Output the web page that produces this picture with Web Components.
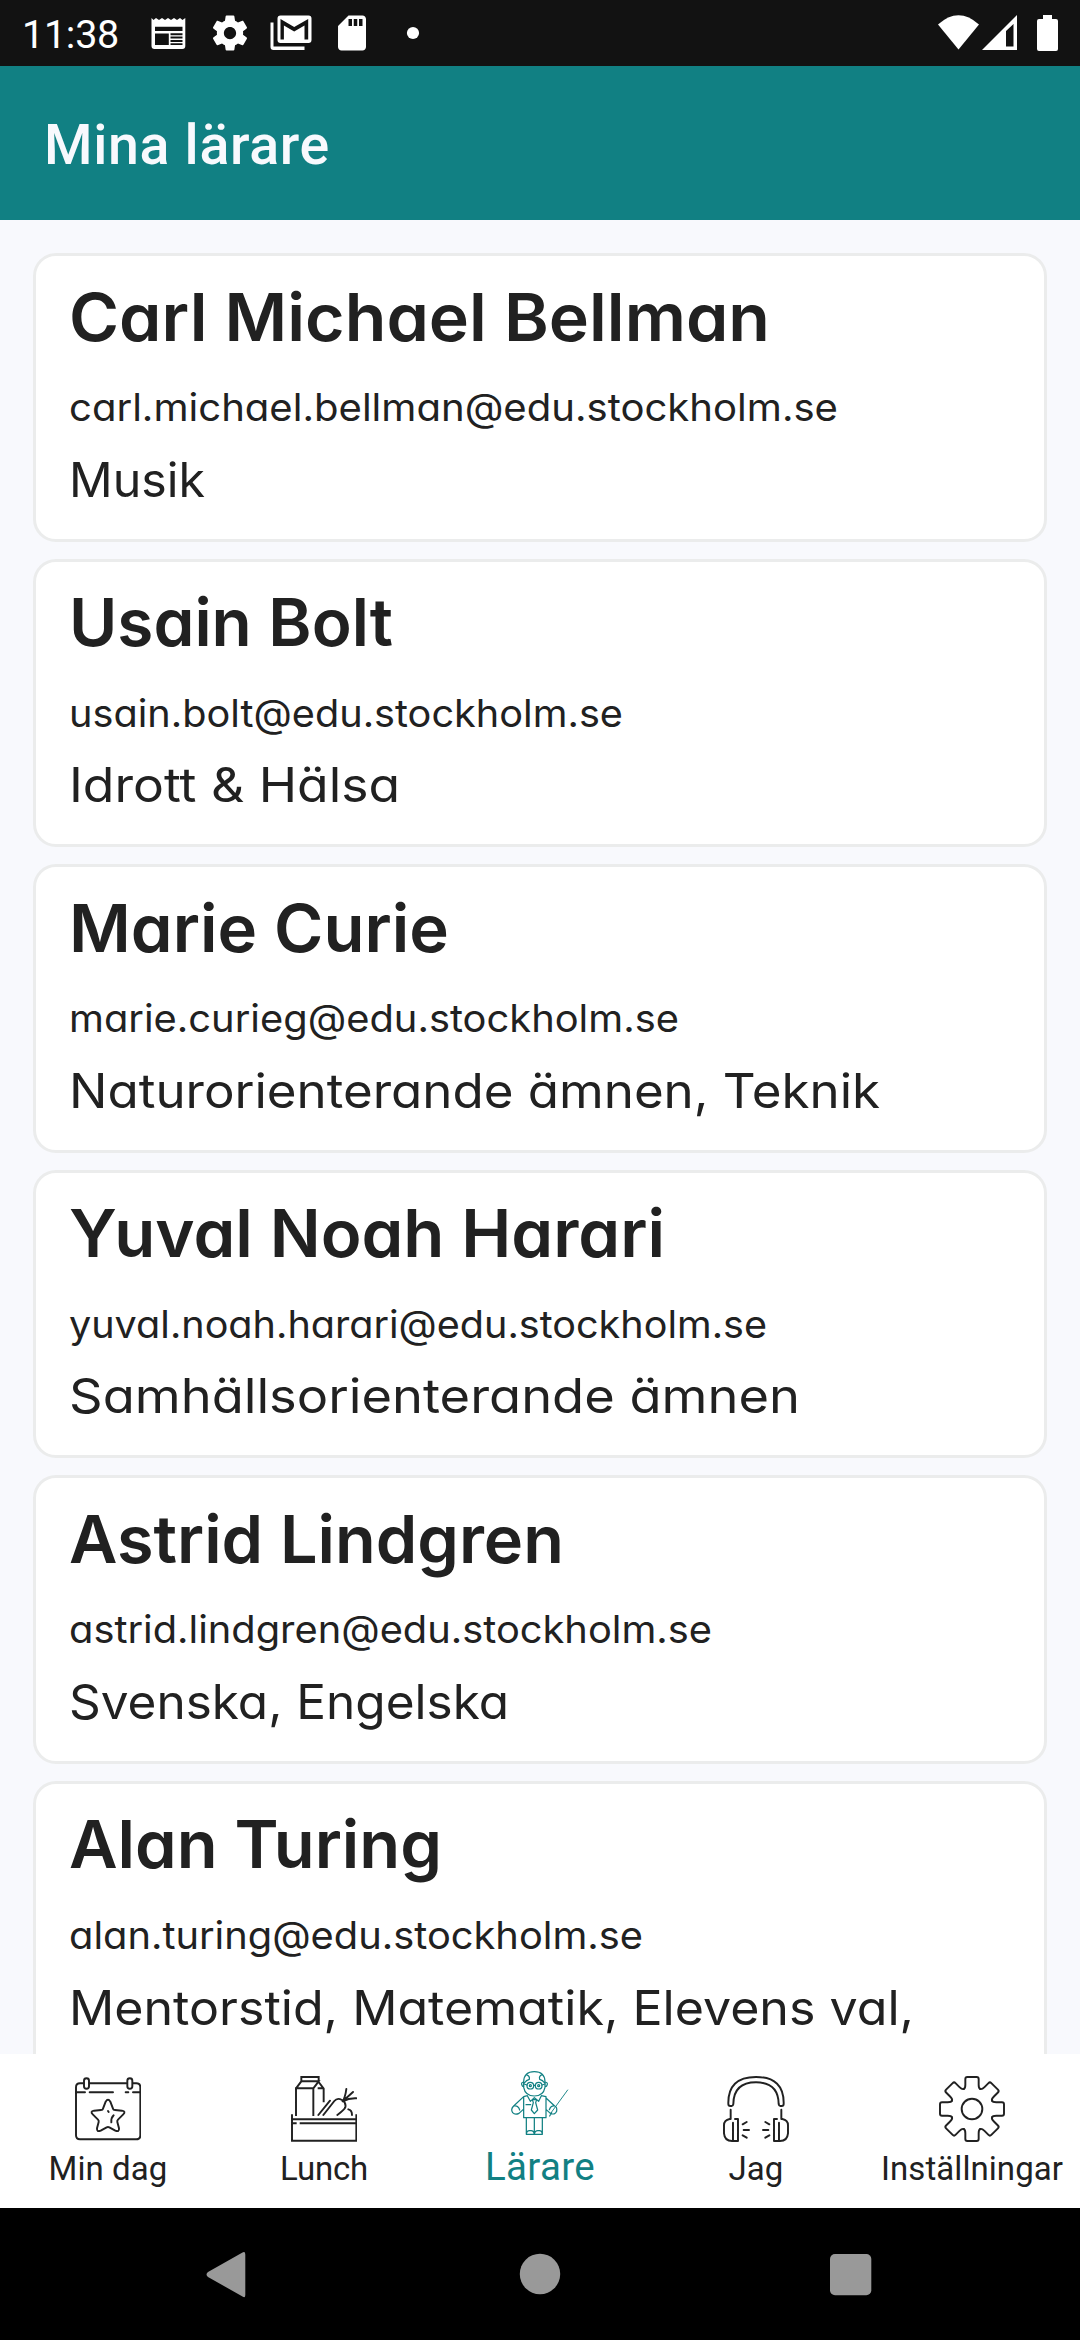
<!DOCTYPE html>
<html lang="sv">
<head>
<meta charset="utf-8">
<title>Mina lärare</title>
<style>
html,body{margin:0;padding:0}
body{width:1080px;height:2340px;overflow:hidden;font-family:Roboto,"Liberation Sans",sans-serif;background:#f8f9fd}
</style>
</head>
<body>
<school-app></school-app>
<script>
function define(name, html, after) {
  const t = document.createElement('template');
  t.innerHTML = html;
  customElements.define(name, class extends HTMLElement {
    connectedCallback() {
      if (this.shadowRoot) return;
      this.attachShadow({ mode: 'open' }).appendChild(t.content.cloneNode(true));
      if (after) after(this, this.shadowRoot);
    }
  });
}

/* One line of text fitted to the width "w": by tracking, or by widening the glyphs if "stretch" is set. */
define('fit-text', `<style>:host{display:block;white-space:nowrap}span{display:inline-block;transform-origin:0 50%}</style><span></span>`, (el, root) => {
  const s = root.querySelector('span');
  s.textContent = el.getAttribute('text');
  const w = parseFloat(el.getAttribute('w'));
  const n = s.textContent.length;
  const natural = s.getBoundingClientRect().width;
  if (!w || !n) return;
  if (el.hasAttribute('stretch')) s.style.transform = `scaleX(${(w / natural).toFixed(4)})`;
  else s.style.letterSpacing = ((w - natural) / n).toFixed(3) + 'px';
});

define('status-bar', `<style>
:host{display:flex;box-sizing:border-box;height:66px;background:#121212;color:#fff;padding:0 17px 0 22px;align-items:center}
.time{font-size:39.5px;line-height:66px;width:125.5px;padding-top:3px;box-sizing:border-box}
.icons{display:flex;gap:19px;flex:1;align-items:center}
.icons svg{width:42px;height:42px;display:block}
.sys{display:block;width:127px;height:66px}
svg{fill:#fff}
</style>
<div class="time"><fit-text text="11:38" w="97"></fit-text></div>
<div class="icons">
<svg viewBox="147.5 12 42 42"><path fill-rule="evenodd" d="M151 18l2 2 2.5-2 3 2 3-2 3 2 3-2 3 2 3-2 3 2 3-2 2.500 2 2.800-2v28q0 3-3 3H154q-3 0-3-3zM154.500 26.700V31H182V26.700zM154.500 33.500V45H168.300V33.500zM170 33.300v2h12v-2zm0 3.300v2h12v-2zm0 3.300v2h12v-2zm0 3.300v1.800h12v-1.800z"/></svg>
<svg viewBox="0 0 24 24"><path d="M19.43 12.98c.04-.32.07-.64.07-.98s-.03-.66-.07-.98l2.110-1.650c.19-.15.24-.42.12-.64l-2-3.460c-.12-.22-.39-.3-.61-.22l-2.490 1c-.52-.4-1.080-.73-1.690-.98l-.38-2.650C14.460 2.180 14.250 2 14 2h-4c-.25 0-.46.18-.49.42l-.38 2.650c-.61.25-1.170.59-1.690.98l-2.490-1c-.23-.09-.49 0-.61.22l-2 3.460c-.13.22-.07.49.12.64l2.110 1.650c-.04.32-.07.65-.07.98s.03.66.07.98l-2.110 1.650c-.19.15-.24.42-.12.64l2 3.460c.12.22.39.3.61.22l2.490-1c.52.4 1.080.73 1.690.98l.38 2.650c.03.24.24.42.49.42h4c.25 0 .46-.18.49-.42l.38-2.650c.61-.25 1.170-.59 1.690-.98l2.490 1c.23.09.49 0 .61-.22l2-3.460c.12-.22.07-.49-.12-.64l-2.110-1.650zM12 15.500c-1.930 0-3.500-1.570-3.500-3.500s1.570-3.500 3.500-3.500 3.500 1.570 3.500 3.500-1.570 3.500-3.500 3.500z"/></svg>
<svg viewBox="269.5 12.5 42 42"><path fill-rule="evenodd" d="M270 23h3v24h31v3.500H273q-3 0-3-3zM280 16h28q3 0 3 3v21.500q0 3-3 3H280q-3 0-3-3V19q0-3 3-3zM280 40h3.400V26l10.300 6 10.300-6v14h3.700V19.500L293.700 27.500 280 19.500z"/></svg>
<svg viewBox="0 0 24 24"><path d="M18 2h-8L4.020 8 4 20c0 1.100.9 2 2 2h12c1.100 0 2-.9 2-2V4c0-1.100-.9-2-2-2zm-6 6h-2V4h2v4zm3 0h-2V4h2v4zm3 0h-2V4h2v4z"/></svg>
<svg viewBox="0 0 42 42"><circle cx="21" cy="21" r="6.100"/></svg>
</div>
<svg class="sys" viewBox="936 0 127 66"><path d="M938 24.500Q958.500 6 979 24.500L958.500 49.500z"/><path fill-rule="evenodd" d="M982 50L1017 15V50zM1006 31V46.500H1013.500V24z"/><path d="M1043 15h9v4h4q2 0 2 2v28q0 2-2 2h-17q-2 0-2-2V21q0-2 2-2h4z"/></svg>`);

define('app-header', `<style>
:host{display:flex;box-sizing:border-box;height:154px;background:#118083;color:#f8f9fd;padding:4px 0 0 44px;align-items:center;font-size:55.500px;font-weight:500}
</style><fit-text text="Mina lärare" w="286"></fit-text>`);

define('teacher-card', `<style>
:host{display:block;box-sizing:border-box;min-height:288.600px;background:#fff;border:3px solid #ebecec;border-radius:23px;padding:11.500px 33px 0;color:#212121;font-family:Inter,Lato,sans-serif;font-feature-settings:"cv11"}
:host([tall]){min-height:360px}
.name{font-size:66px;line-height:99px;font-weight:600}
.mail{font-size:38.500px;line-height:58px;margin-top:11.500px}
.subj{font-size:48px;line-height:74px;margin-top:6.700px}
</style><div class="name"></div><div class="mail"></div><div class="subj"></div>`, (el, root) => {
  for (const k of ['name', 'mail', 'subj']) {
    const [text, w] = el.getAttribute(k).split('|');
    const f = document.createElement('fit-text');
    f.setAttribute('text', text);
    f.setAttribute('w', w);
    f.setAttribute('stretch', '');
    root.querySelector('.' + k).appendChild(f);
  }
});

define('teacher-list', `<style>
:host{display:flex;flex-direction:column;gap:17px;box-sizing:border-box;height:1834px;overflow:hidden;padding:33px 33px 0;background:#f8f9fd}
::slotted(*){flex:none}
</style><slot></slot>`);

define('tab-item', `<style>
:host{display:flex;flex-direction:column;align-items:center;flex:1;height:154px;box-sizing:border-box;padding-top:22px;color:#212121;font-size:33px}
:host([active]){color:#118083;font-size:38.500px;padding-top:16px}
::slotted(svg){width:66px;height:66px;display:block;fill:none;stroke:currentColor;stroke-width:5.800;stroke-linecap:round;stroke-linejoin:round}
.label{line-height:40px;margin-top:7px}
:host([active]) .label{line-height:44px;margin-top:9px}
</style><slot></slot><div class="label"></div>`, (el, root) => {
  const f = document.createElement('fit-text');
  f.setAttribute('text', el.getAttribute('label'));
  f.setAttribute('w', el.getAttribute('w'));
  root.querySelector('.label').appendChild(f);
});

define('tab-bar', `<style>:host{display:flex;height:154px;background:#fff}</style>
<tab-item label="Min dag" w="119"><svg viewBox="105 48 198 198">
<path d="M129 70H120Q108 70 108 82V226Q108 238 120 238H289Q301 238 301 226V82Q301 70 289 70H279M149 70H259M108 97H135M149 97H219M257 97H265M279 97H301"/>
<rect x="132" y="55" width="15" height="31" rx="7.500"/><rect x="262" y="55" width="15" height="31" rx="7.500"/>
<path d="M197 125Q204 114 211 125L219 146Q220 150 225 150L246 152Q259 154 249 164L234 179Q231 182 232 186L237 205Q238 217 226 212L208 202Q204 200 200 202L182 212Q170 217 171 205L176 186Q177 182 174 179L159 164Q149 154 162 152L183 150Q188 150 189 146ZM204 153L206 156M221 166Q213 173 214 187"/></svg></tab-item>
<tab-item label="Lunch" w="88"><svg viewBox="123 48 198 198" style="stroke-linecap:butt;stroke-linejoin:miter">
<path d="M126 163V242H319V163M126 178H319M126 190H140M149 190H319"/>
<path d="M138 168V85H190V168M138 85L154 64H206L190 85M154 66V51H206V66L221 86V127M206 64L190 85M203 85H221"/>
<path stroke-linecap="round" d="M205 165L240 122M220 165L253 123Q262 112 276 120Q289 128 286 142Q284 149 262 165M278 124Q286 111 289 87M278 124L309 96M278 124Q297 114 319 115M295 148Q306 150 306 165"/></svg></tab-item>
<tab-item active label="Lärare" w="110"><svg viewBox="111 60 198 198" style="stroke-width:3.7">
<path d="M161 112V95Q162 65 193 65Q224 65 225 95V112Q220 138 193 138Q166 138 161 112M161 96Q152 97 156 106Q158 111 162 108M225 96Q235 97 231 106Q229 111 225 108M169 74Q180 78 178 88Q169 90 163 99M216 74Q206 78 209 88Q218 90 224 99"/>
<circle cx="181" cy="107" r="10"/><circle cx="206" cy="107" r="10"/><circle cx="181" cy="107" r="3"/><circle cx="206" cy="107" r="3"/><path d="M162 102L171 105M216 105L225 102M191 106H196"/>
<path d="M172 137L161 140L131 168Q121 178 128 188Q135 196 147 190L160 178M161 140V203H228V140L214 137M172 137L181 154L193 143L206 154L214 137M133 168Q145 166 149 180M187 149H200L197 158L203 180L193 191L184 180L190 158ZM168 164H182M228 144L254 168Q262 170 260 184Q255 196 241 190L228 178M254 168Q243 166 238 179M245 188L239 198M169 203V253H217V203M193 203V253M169 253Q170 240 181 242Q191 240 193 253M193 253Q195 240 206 242Q216 240 217 253"/><path stroke-width="2.800" d="M293 120L242 190"/></svg></tab-item>
<tab-item label="Jag" w="55"><svg viewBox="129 48 198 198">
<path d="M145 132Q143 51 228 51Q313 51 311 132Q311 138 305 138H301Q297 138 296 132Q295 67 228 67Q161 67 160 132Q159 138 155 138H151Q145 138 145 132Z"/>
<path d="M152 149V177H149Q132 180 132 196V220Q134 243 156 243H174V177H165M159 188V243M304 149V177H307Q324 180 324 196V220Q322 243 300 243H282V177H291M297 188V243M188 193L200 186M191 210H207M188 226L200 233M268 193L256 186M265 210H249M268 226L256 233"/></svg></tab-item>
<tab-item label="Inställningar" w="182"><svg class="gear" viewBox="-99 -99 198 198"></svg></tab-item>`, (el, root) => {
  const tooth = 'M-24.900-60C-21.200-61.500-20-66-20-73V-90Q-20-96-14-96H14Q20-96 20-90V-73C20-66 21.200-61.500 24.900-60';
  let s = '<circle r="31"/>';
  for (let i = 0; i < 8; i++) s += `<path d="${tooth}" transform="rotate(${i * 45})"/>`;
  root.querySelector('.gear').innerHTML = s;
});

define('system-nav', `<style>
:host{display:flex;height:132px;background:#000;align-items:center;justify-content:space-between;box-sizing:border-box;padding:0 205px 0 205px}
svg{width:46px;height:48px;fill:#999;display:block}
</style>
<svg viewBox="205 2250 46 48"><path d="M242.500 2252.500Q245.300 2251 245.300 2254.500V2295Q245.300 2298.500 242.500 2296.500L208 2277Q205 2274.500 208 2272z"/></svg>
<svg viewBox="517 2250 46 48"><circle cx="540" cy="2274" r="20.200"/></svg>
<svg viewBox="829 2250 46 48"><rect x="830" y="2254" width="41.300" height="41.300" rx="5"/></svg>`);

define('school-app', `<style>:host{display:flex;flex-direction:column;width:1080px;height:2340px;overflow:hidden}:host>*{flex:none}</style>
<status-bar></status-bar><app-header></app-header>
<teacher-list>
<teacher-card name="Carl Michael Bellman|701" mail="carl.michael.bellman@edu.stockholm.se|769" subj="Musik|136"></teacher-card>
<teacher-card name="Usain Bolt|324" mail="usain.bolt@edu.stockholm.se|554" subj="Idrott &amp; Hälsa|331"></teacher-card>
<teacher-card name="Marie Curie|380" mail="marie.curieg@edu.stockholm.se|610" subj="Naturorienterande ämnen, Teknik|811"></teacher-card>
<teacher-card name="Yuval Noah Harari|596" mail="yuval.noah.harari@edu.stockholm.se|698" subj="Samhällsorienterande ämnen|731"></teacher-card>
<teacher-card name="Astrid Lindgren|495" mail="astrid.lindgren@edu.stockholm.se|643" subj="Svenska, Engelska|440"></teacher-card>
<teacher-card tall name="Alan Turing|373" mail="alan.turing@edu.stockholm.se|574" subj="Mentorstid, Matematik, Elevens val,|845"></teacher-card>
</teacher-list>
<tab-bar></tab-bar><system-nav></system-nav>`);
</script>
</body>
</html>
